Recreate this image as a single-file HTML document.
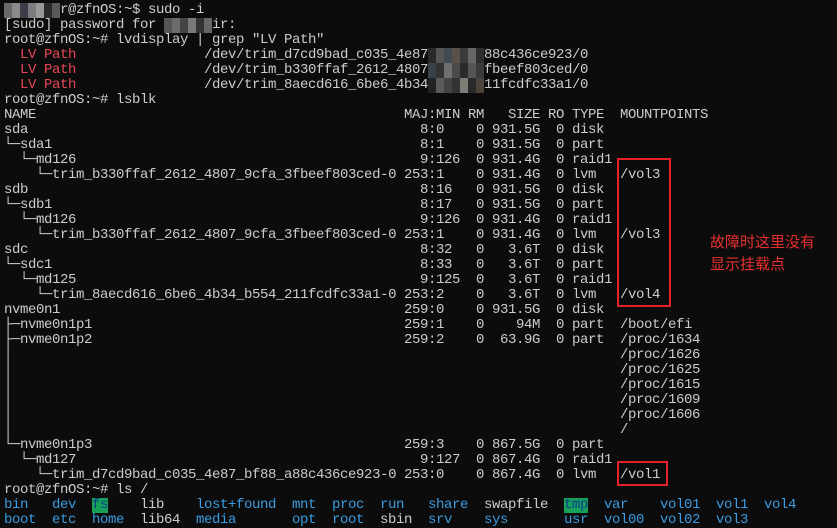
<!DOCTYPE html>
<html><head><meta charset="utf-8"><style>
html,body{margin:0;padding:0;background:#0c0c0c;}
body{width:837px;height:527px;overflow:hidden;position:relative;background:#0c0c0c;}
#t{position:absolute;left:4px;top:3px;font-family:"Liberation Mono","DejaVu Sans Mono",monospace;font-size:14px;letter-spacing:-0.4px;color:#cccccc;}
.l{position:relative;height:15px;line-height:15px;white-space:pre;}
.l span{position:absolute;top:0;white-space:pre;}
.r{color:#e74856;}
.b{color:#3b9be0;}
.g{background:#16a05a;color:#0a3f8f;}
.box{position:absolute;border:2px solid #e8202a;box-sizing:border-box;}
.cn{position:absolute;left:710px;color:#e8302f;font-family:"Noto Sans CJK SC","WenQuanYi Zen Hei",sans-serif;font-size:15px;line-height:22px;}
.blur{position:absolute;height:15px;}
.blur i{display:inline-block;width:8px;height:15px;vertical-align:top;}
</style></head><body>
<div id="t">
<div class="l"><span style="left:0"><span class="blur" style="left:0;width:56px;display:flex"><i style="background:#6a6a6a"></i><i style="background:#8a8a8a"></i><i style="background:#3b3d48"></i><i style="background:#7c7c80"></i><i style="background:#999"></i><i style="background:#2a2a2a"></i><i style="background:#5a5a5a"></i></span></span><span style="left:56px">r@zfnOS:~$ sudo -i</span></div>
<div class="l"><span style="left:0">[sudo] password for </span><span class="blur" style="left:160px;display:flex"><i style="background:#555"></i><i style="background:#6b6b6b"></i><i style="background:#444"></i><i style="background:#7a7a7a"></i><i style="background:#333"></i><i style="background:#666"></i></span><span style="left:208px">ir:</span></div>
<div class="l"><span style="left:0">root@zfnOS:~# lvdisplay | grep "LV Path"</span></div>
<div class="l"><span style="left:16px" class="r">LV Path</span><span style="left:200px">/dev/trim_d7cd9bad_c035_4e87</span><span class="blur" style="left:424px;display:flex"><i style="background:#2a2a2a"></i><i style="background:#555"></i><i style="background:#444a55"></i><i style="background:#5a5048"></i><i style="background:#3a3a3a"></i><i style="background:#666"></i><i style="background:#2e2e2e"></i></span><span style="left:480px">88c436ce923/0</span></div>
<div class="l"><span style="left:16px" class="r">LV Path</span><span style="left:200px">/dev/trim_b330ffaf_2612_4807</span><span class="blur" style="left:424px;display:flex"><i style="background:#3a4048"></i><i style="background:#333"></i><i style="background:#707070"></i><i style="background:#4a4a4a"></i><i style="background:#2a2a2a"></i><i style="background:#555"></i><i style="background:#3a3a3a"></i></span><span style="left:480px">fbeef803ced/0</span></div>
<div class="l"><span style="left:16px" class="r">LV Path</span><span style="left:200px">/dev/trim_8aecd616_6be6_4b34</span><span class="blur" style="left:424px;display:flex"><i style="background:#222"></i><i style="background:#5a5a5a"></i><i style="background:#444"></i><i style="background:#333"></i><i style="background:#7a8078"></i><i style="background:#2a2a2a"></i><i style="background:#4c4438"></i></span><span style="left:480px">11fcdfc33a1/0</span></div>
<div class="l"><span style="left:0">root@zfnOS:~# lsblk</span></div>
<div class="l"><span style="left:0">NAME</span><span style="left:400px">MAJ:MIN RM   SIZE RO TYPE  MOUNTPOINTS</span></div>
<div class="l"><span style="left:0">sda</span><span style="left:400px">  8:0    0 931.5G  0 disk</span></div>
<div class="l"><span style="left:0">└─sda1</span><span style="left:400px">  8:1    0 931.5G  0 part</span></div>
<div class="l"><span style="left:0">  └─md126</span><span style="left:400px">  9:126  0 931.4G  0 raid1</span></div>
<div class="l"><span style="left:0">    └─trim_b330ffaf_2612_4807_9cfa_3fbeef803ced-0</span><span style="left:400px">253:1    0 931.4G  0 lvm   /vol3</span></div>
<div class="l"><span style="left:0">sdb</span><span style="left:400px">  8:16   0 931.5G  0 disk</span></div>
<div class="l"><span style="left:0">└─sdb1</span><span style="left:400px">  8:17   0 931.5G  0 part</span></div>
<div class="l"><span style="left:0">  └─md126</span><span style="left:400px">  9:126  0 931.4G  0 raid1</span></div>
<div class="l"><span style="left:0">    └─trim_b330ffaf_2612_4807_9cfa_3fbeef803ced-0</span><span style="left:400px">253:1    0 931.4G  0 lvm   /vol3</span></div>
<div class="l"><span style="left:0">sdc</span><span style="left:400px">  8:32   0   3.6T  0 disk</span></div>
<div class="l"><span style="left:0">└─sdc1</span><span style="left:400px">  8:33   0   3.6T  0 part</span></div>
<div class="l"><span style="left:0">  └─md125</span><span style="left:400px">  9:125  0   3.6T  0 raid1</span></div>
<div class="l"><span style="left:0">    └─trim_8aecd616_6be6_4b34_b554_211fcdfc33a1-0</span><span style="left:400px">253:2    0   3.6T  0 lvm   /vol4</span></div>
<div class="l"><span style="left:0">nvme0n1</span><span style="left:400px">259:0    0 931.5G  0 disk</span></div>
<div class="l"><span style="left:0">├─nvme0n1p1</span><span style="left:400px">259:1    0    94M  0 part  /boot/efi</span></div>
<div class="l"><span style="left:0">├─nvme0n1p2</span><span style="left:400px">259:2    0  63.9G  0 part  /proc/1634</span></div>
<div class="l"><span style="left:0">│</span><span style="left:616px">/proc/1626</span></div>
<div class="l"><span style="left:0">│</span><span style="left:616px">/proc/1625</span></div>
<div class="l"><span style="left:0">│</span><span style="left:616px">/proc/1615</span></div>
<div class="l"><span style="left:0">│</span><span style="left:616px">/proc/1609</span></div>
<div class="l"><span style="left:0">│</span><span style="left:616px">/proc/1606</span></div>
<div class="l"><span style="left:0">│</span><span style="left:616px">/</span></div>
<div class="l"><span style="left:0">└─nvme0n1p3</span><span style="left:400px">259:3    0 867.5G  0 part</span></div>
<div class="l"><span style="left:0">  └─md127</span><span style="left:400px">  9:127  0 867.4G  0 raid1</span></div>
<div class="l"><span style="left:0">    └─trim_d7cd9bad_c035_4e87_bf88_a88c436ce923-0</span><span style="left:400px">253:0    0 867.4G  0 lvm   /vol1</span></div>
<div class="l"><span style="left:0">root@zfnOS:~# ls /</span></div>
<div class="l"><span style="left:0" class="b">bin</span><span style="left:48px" class="b">dev</span><span style="left:88px" class="g">fs</span><span style="left:136px">lib</span><span style="left:192px" class="b">lost+found</span><span style="left:288px" class="b">mnt</span><span style="left:328px" class="b">proc</span><span style="left:376px" class="b">run</span><span style="left:424px" class="b">share</span><span style="left:480px">swapfile</span><span style="left:560px" class="g">tmp</span><span style="left:600px" class="b">var</span><span style="left:656px" class="b">vol01</span><span style="left:712px" class="b">vol1</span><span style="left:760px" class="b">vol4</span></div>
<div class="l"><span style="left:0" class="b">boot</span><span style="left:48px" class="b">etc</span><span style="left:88px" class="b">home</span><span style="left:136px">lib64</span><span style="left:192px" class="b">media</span><span style="left:288px" class="b">opt</span><span style="left:328px" class="b">root</span><span style="left:376px">sbin</span><span style="left:424px" class="b">srv</span><span style="left:480px" class="b">sys</span><span style="left:560px" class="b">usr</span><span style="left:600px" class="b">vol00</span><span style="left:656px" class="b">vol02</span><span style="left:712px" class="b">vol3</span></div>
</div>
<div class="box" style="left:617px;top:158px;width:54px;height:149px"></div>
<div class="box" style="left:617px;top:461px;width:51px;height:25px"></div>
<div class="cn" style="top:231px">故障时这里没有<br>显示挂载点</div>
</body></html>
